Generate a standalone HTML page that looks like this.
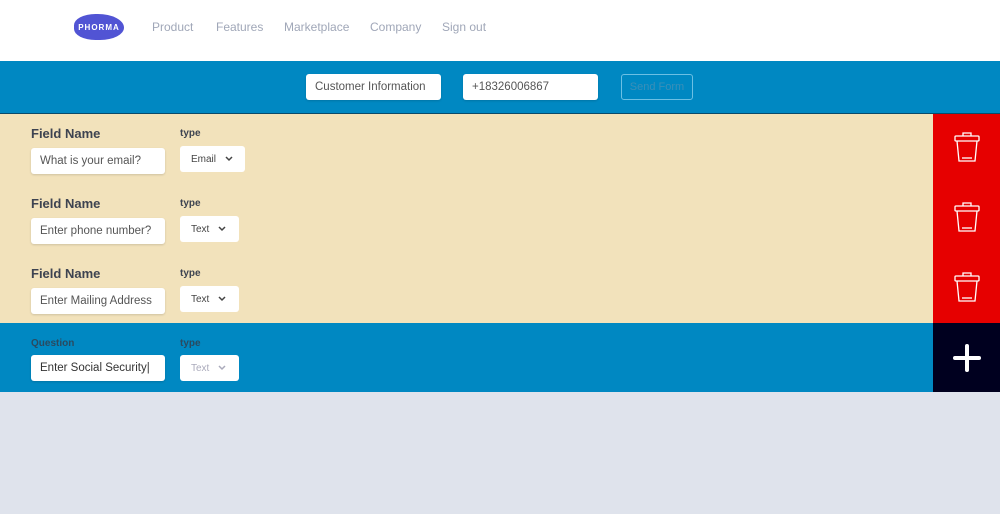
<!DOCTYPE html>
<html><head><style>
*{margin:0;padding:0;box-sizing:border-box}
body{width:1000px;height:514px;overflow:hidden;background:#dfe3ec;font-family:"Liberation Sans",sans-serif;position:relative}
.abs{position:absolute}
.nav a{position:absolute;top:20px;font-size:12px;color:#a0a7b8}
.inp{position:absolute;background:#fff;border-radius:3px;font-size:11.5px;color:#555;padding-left:9px;display:flex;align-items:center;box-shadow:0 1px 2px rgba(0,0,0,.15)}
.lbl{position:absolute;font-weight:bold;font-size:13px;color:#3d4350}
.tl{position:absolute;font-weight:bold;font-size:10px;color:#3d4350}
.sel{position:absolute;background:#fff;border-radius:3px;font-size:10px;color:#444;padding-left:11px;display:flex;align-items:center;height:26px}
.sel svg{margin-left:9px}
</style></head><body>
<div class="abs" style="left:0;top:0;width:1000px;height:61px;background:#fff"></div>
<div class="abs" style="left:74px;top:14px;width:50px;height:26px;background:#5154d4;border-radius:45% 55% 50% 45%;color:#fff;font-size:8px;font-weight:bold;letter-spacing:1px;display:flex;align-items:center;justify-content:center">PHORMA</div>
<div class="nav"><a style="left:152px">Product</a><a style="left:216px">Features</a><a style="left:284px">Marketplace</a><a style="left:370px">Company</a><a style="left:442px">Sign out</a></div>
<div class="abs" style="left:0;top:61px;width:1000px;height:53px;background:#0088c2;border-bottom:1px solid #0a4a6a"></div>
<div class="inp" style="left:306px;top:74px;width:135px;height:26px">Customer Information</div>
<div class="inp" style="left:463px;top:74px;width:135px;height:26px">+18326006867</div>
<div class="abs" style="left:621px;top:74px;width:72px;height:26px;border:1px solid #6cc0e4;border-radius:3px;color:#3a8fb8;font-size:11px;display:flex;align-items:center;justify-content:center">Send Form</div>
<div class="abs" style="left:0;top:114px;width:933px;height:209px;background:#f2e2bb"></div>
<div class="abs" style="left:933px;top:114px;width:67px;height:209px;background:#e60000"></div>
<div class="abs" style="left:0;top:323px;width:933px;height:69px;background:#0088c2"></div>
<div class="abs" style="left:933px;top:323px;width:67px;height:69px;background:#00001f"></div>
<div class="abs" style="left:953px;top:356px;width:28px;height:4px;background:#fff;border-radius:2px"></div>
<div class="abs" style="left:965px;top:344px;width:4px;height:28px;background:#fff;border-radius:2px"></div>

<svg width="0" height="0" style="position:absolute"><defs><path id="cv" d="M1 1 L4 4 L7 1" fill="none" stroke="#444" stroke-width="1.5"/></defs></svg>
<div class="lbl" style="left:31px;top:126px">Field Name</div><div class="tl" style="left:180px;top:128px">type</div>
<div class="inp" style="left:31px;top:148px;width:134px;height:26px">What is your email?</div>
<div class="sel" style="left:180px;top:146px;width:65px">Email <svg width="8" height="6"><use href="#cv"/></svg></div>
<div class="lbl" style="left:31px;top:196px">Field Name</div><div class="tl" style="left:180px;top:198px">type</div>
<div class="inp" style="left:31px;top:218px;width:134px;height:26px">Enter phone number?</div>
<div class="sel" style="left:180px;top:216px;width:59px">Text <svg width="8" height="6"><use href="#cv"/></svg></div>
<div class="lbl" style="left:31px;top:266px">Field Name</div><div class="tl" style="left:180px;top:268px">type</div>
<div class="inp" style="left:31px;top:288px;width:134px;height:26px">Enter Mailing Address</div>
<div class="sel" style="left:180px;top:286px;width:59px">Text <svg width="8" height="6"><use href="#cv"/></svg></div>
<div class="tl" style="left:31px;top:338px;color:#2a4a60">Question</div><div class="tl" style="left:180px;top:338px;color:#2a4a60">type</div>
<div class="inp" style="left:31px;top:355px;width:134px;height:26px;color:#333">Enter Social Security|</div>
<div class="sel" style="left:180px;top:355px;width:59px;color:#aab">Text <svg width="8" height="6"><path d="M1 1 L4 4 L7 1" fill="none" stroke="#aab" stroke-width="1.5"/></svg></div>

<svg class="abs" style="left:953px;top:130px" width="28" height="280" fill="none" stroke="#fff" stroke-width="1.3">
<g id="t"><path d="M10 6 V3 H18 V6"/><rect x="2" y="6" width="24" height="5" rx="1"/><path d="M4 11 L6 31 H22 L24 11"/><path d="M9 28 H19"/></g>
<use href="#t" y="70"/><use href="#t" y="140"/>
</svg>
</body></html>
